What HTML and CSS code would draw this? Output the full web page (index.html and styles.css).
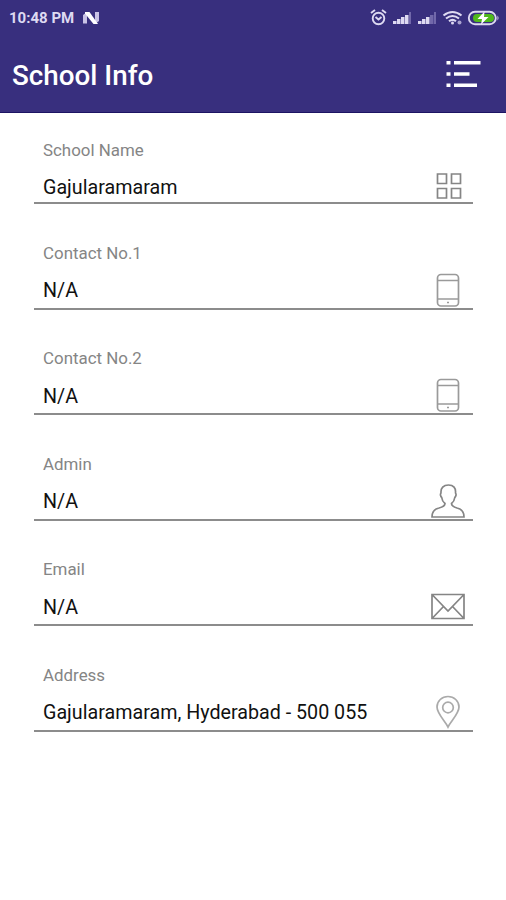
FILE: index.html
```html
<!DOCTYPE html>
<html lang="en">

<head>
    <meta charset="UTF-8">
    <meta name="viewport" content="width=device-width, initial-scale=1.0">
    <title>School Info</title>
    <link rel="stylesheet" href="styles.css">
</head>

<body>
    <header class="header">
        <div class="status">
            <span class="time">10:48 PM</span>
            <svg class="logo" width="17" height="14" viewBox="0 0 17 14">
                <path d="M0 12.500V4L4 1V12.500ZM12 9V1H16V10L12 13Z" fill="#c9c3e6"/>
                <path d="M2 1H6.500L15 13H10.500L2 2.500Z" fill="#fff"/>
            </svg>
            <svg class="status-icons" width="130" height="20" viewBox="0 0 130 20">
                <!-- alarm -->
                <g fill="none" stroke="#dedaf2" stroke-width="1.9">
                    <circle cx="8.500" cy="10.500" r="5.800"/>
                    <path d="M1 5L5 2M12 2L16 5M5.500 9L8.500 11.500L11.500 9"/>
                </g>
                <!-- signal -->
                <g fill="#dedaf2">
                    <path d="M23 13h3.500v3h-3.500zM27 11h3.500v5h-3.500zM31 9h3.500v7h-3.500zM35 7h3.500v9h-3.500z"/>
                    <path d="M48 13h3.500v3h-3.500zM52 11h3.500v5h-3.500zM56 9h3.500v7h-3.500z"/>
                </g>
                <path d="M39 4h2v12h-2zM60 7h3.500v9h-3.500zM64 4h2v12h-2z" fill="#7168aa"/>
                <!-- wifi -->
                <g fill="none" stroke="#dedaf2" stroke-width="2.100">
                    <path d="M73.500 7.500Q82.500 0.500 91.500 7.500M76 10.500Q82.500 5.500 89 10.500M79 13.300Q82.500 10.500 86 13.300"/>
                </g>
                <circle cx="82.500" cy="15" r="1.500" fill="#dedaf2"/>
                <circle cx="89.500" cy="14.500" r="2" fill="#aaa3d0"/>
                <!-- battery -->
                <rect x="98.800" y="3.800" width="27" height="12.400" rx="6.200" fill="none" stroke="#dedaf2" stroke-width="1.900"/>
                <path d="M127.500 7.500q2 2.500 0 5z" fill="#dedaf2"/>
                <rect x="103" y="6" width="21" height="8" rx="4" fill="#50b91c"/>
                <path d="M114.500 3.500L107.500 11H112L111 16.500L118.500 9H114Z" fill="#fff"/>
            </svg>
        </div>
        <div class="toolbar">
            <h1 class="title">School Info</h1>
            <svg class="menu" width="36" height="28" viewBox="0 0 36 28" fill="#fff">
                <path d="M1.500 1h4v3.500h-4zM9 1H35.500v3.500H9zM1.500 12.300h4v3.500h-4zM9 12.300H24.500v3.500H9zM1.500 23.500h4v3.500h-4zM9 23.500H32v3.500H9z"/>
            </svg>
        </div>
    </header>

    <main class="info">
        <div class="field field-first">
            <div class="label">School Name</div>
            <div class="row">
                <span class="value">Gajularamaram</span>
                <svg class="icon icon-grid" viewBox="0 0 34 34">
                    <path d="M6.500 5h9v9.500h-9zM20.500 5h9v9.500h-9zM6.500 19.500h9v9.500h-9zM20.500 19.500h9v9.500h-9z"/>
                </svg>
            </div>
        </div>
        <div class="field">
            <div class="label">Contact No.1</div>
            <div class="row">
                <span class="value">N/A</span>
                <svg class="icon icon-phone" viewBox="0 0 34 34">
                    <rect x="6.500" y="1.500" width="21" height="31.500" rx="3.500"/>
                    <path d="M6.500 7.500h21M6.500 26h21M16 29.500h2"/>
                </svg>
            </div>
        </div>
        <div class="field">
            <div class="label">Contact No.2</div>
            <div class="row">
                <span class="value">N/A</span>
                <svg class="icon icon-phone" viewBox="0 0 34 34">
                    <rect x="6.500" y="1.500" width="21" height="31.500" rx="3.500"/>
                    <path d="M6.500 7.500h21M6.500 26h21M16 29.500h2"/>
                </svg>
            </div>
        </div>
        <div class="field">
            <div class="label">Admin</div>
            <div class="row">
                <span class="value">N/A</span>
                <svg class="icon icon-user" viewBox="0 0 34 34">
                    <path d="M1 33C1 27.500 3.500 25 8 24C12 23 14 22 14 19.500C12 18 11 16 10.700 13.500C9.500 12.500 9 10 10 9C9.500 4 12.500 1 17.500 1C22.500 1 25 4 24.500 9C25.500 10 25 12.500 23.800 13.500C23.500 16 22.500 18 20.500 19.500C20.500 22 22.500 23 26 24C30.500 25 33 27.500 33 33Z"/>
                </svg>
            </div>
        </div>
        <div class="field">
            <div class="label">Email</div>
            <div class="row">
                <span class="value">N/A</span>
                <svg class="icon icon-mail" viewBox="0 0 34 34">
                    <path d="M1 5.500h32v24h-32zM1 5.500L17 22L33 5.500M1 29.500L12.500 17.500M33 29.500L21.500 17.500"/>
                </svg>
            </div>
        </div>
        <div class="field">
            <div class="label">Address</div>
            <div class="row">
                <span class="value">Gajularamaram, Hyderabad - 500 055</span>
                <svg class="icon icon-pin" viewBox="0 0 34 34">
                    <path d="M17 32C14 26 6 18.500 6 12C6 6 11 1.500 17 1.500S28 6 28 12C28 18.500 20 26 17 32Z"/>
                    <circle cx="17" cy="12.500" r="5.300"/>
                </svg>
            </div>
        </div>
    </main>
</body>

</html>
```
FILE: styles.css
```css
body {
    margin: 0;
    background-color: #fff;
    font-family: Roboto, "Liberation Sans", sans-serif;
}

.header {
    height: 113px;
    box-sizing: border-box;
    background-color: #382f7e;
    border-bottom: 1px solid #1d1463;
    color: #fff;
}

.status {
    display: flex;
    align-items: center;
    height: 36px;
    padding: 0 6px 0 9px;
}

.time {
    width: 65px;
    font-size: 15px;
    font-weight: bold;
    color: #dedaf2;
    white-space: nowrap;
}

.logo {
    margin-left: 9px;
}

.status-icons {
    margin-left: auto;
}

.toolbar {
    display: flex;
    align-items: center;
    justify-content: space-between;
    height: 76px;
    padding: 0 25px 0 12px;
}

.title {
    margin: 0;
    padding-top: 2px;
    font-size: 27.8px;
    font-weight: 500;
}

.info {
    padding: 28px 33px 0 34px;
}

.field {
    box-sizing: border-box;
    height: 66px;
    margin-bottom: 39.5px;
    padding-left: 9px;
    border-bottom: 2px solid #8c8c8c;
}

.field-first {
    height: 63px;
}

.label {
    font-size: 16.9px;
    line-height: 19px;
    color: #858585;
}

.row {
    display: flex;
    align-items: center;
    justify-content: space-between;
    height: 34px;
    margin-top: 10px;
    padding-right: 8px;
}

.field-first .row {
    margin-top: 9px;
}

.value {
    padding-top: 2px;
    font-size: 19.7px;
    color: #111;
}

.icon {
    width: 34px;
    height: 34px;
    fill: none;
    stroke: #858585;
    stroke-width: 1.7;
}

.icon-phone {
    stroke: #9a9a9a;
}

.icon-pin {
    stroke: #aaa;
}
```
